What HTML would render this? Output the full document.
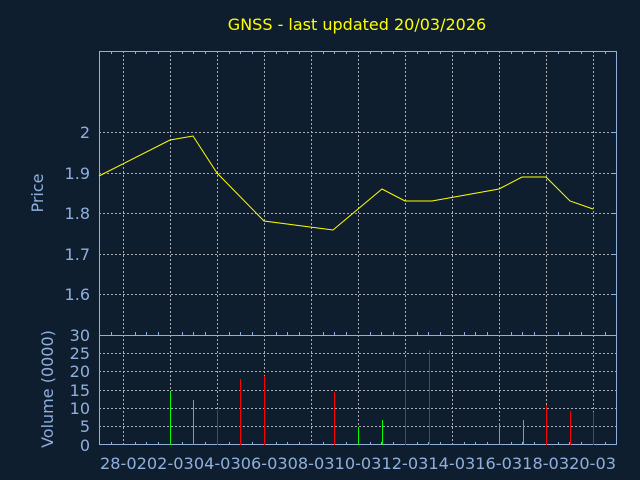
<!DOCTYPE html>
<html><head><meta charset="utf-8"><style>
html,body{margin:0;padding:0;background:#0f1e2f;}
svg{display:block;}
text{font-family:"DejaVu Sans","Liberation Sans",sans-serif;}
</style></head><body>
<svg width="640" height="480" viewBox="0 0 640 480" xmlns="http://www.w3.org/2000/svg">
<rect width="640" height="480" fill="#0f1e2f"/>
<text x="357" y="30" fill="#ffff00" font-size="16" text-anchor="middle">GNSS - last updated 20/03/2026</text>
<g stroke="#c8c8c8" stroke-width="1" stroke-dasharray="2,2" fill="none" opacity="0.85">
<path d="M123.5 51V445M170.5 51V445M217.5 51V445M264.5 51V445M311.5 51V445M358.5 51V445M405.5 51V445M452.5 51V445M499.5 51V445M546.5 51V445M593.5 51V445"/>
<path d="M99 132.5H617M99 173.5H617M99 213.5H617M99 254.5H617M99 294.5H617"/>
<path d="M99 353.5H617M99 371.5H617M99 390.5H617M99 408.5H617M99 426.5H617"/>
</g>
<g stroke="#8fb0dc" stroke-width="1" fill="none">
<rect x="99.5" y="51.5" width="517" height="393"/>
<path d="M99 335.5H617"/>
<path d="M111.5 51v3M135.5 51v3M146.5 51v3M158.5 51v3M182.5 51v3M193.5 51v3M205.5 51v3M229.5 51v3M240.5 51v3M252.5 51v3M276.5 51v3M287.5 51v3M299.5 51v3M323.5 51v3M334.5 51v3M346.5 51v3M370.5 51v3M381.5 51v3M393.5 51v3M417.5 51v3M428.5 51v3M440.5 51v3M464.5 51v3M475.5 51v3M487.5 51v3M511.5 51v3M522.5 51v3M534.5 51v3M558.5 51v3M569.5 51v3M581.5 51v3M605.5 51v3"/>
<path d="M111.5 335v-3M135.5 335v-3M146.5 335v-3M158.5 335v-3M182.5 335v-3M193.5 335v-3M205.5 335v-3M229.5 335v-3M240.5 335v-3M252.5 335v-3M276.5 335v-3M287.5 335v-3M299.5 335v-3M323.5 335v-3M334.5 335v-3M346.5 335v-3M370.5 335v-3M381.5 335v-3M393.5 335v-3M417.5 335v-3M428.5 335v-3M440.5 335v-3M464.5 335v-3M475.5 335v-3M487.5 335v-3M511.5 335v-3M522.5 335v-3M534.5 335v-3M558.5 335v-3M569.5 335v-3M581.5 335v-3M605.5 335v-3"/>
<path d="M111.5 445v-3M135.5 445v-3M146.5 445v-3M158.5 445v-3M182.5 445v-3M193.5 445v-3M205.5 445v-3M229.5 445v-3M240.5 445v-3M252.5 445v-3M276.5 445v-3M287.5 445v-3M299.5 445v-3M323.5 445v-3M334.5 445v-3M346.5 445v-3M370.5 445v-3M381.5 445v-3M393.5 445v-3M417.5 445v-3M428.5 445v-3M440.5 445v-3M464.5 445v-3M475.5 445v-3M487.5 445v-3M511.5 445v-3M522.5 445v-3M534.5 445v-3M558.5 445v-3M569.5 445v-3M581.5 445v-3M605.5 445v-3"/>
<path d="M612 132.5h5M612 173.5h5M612 213.5h5M612 254.5h5M612 294.5h5"/>
</g>
<polyline fill="none" stroke="#ffff00" stroke-width="1" points="99,176 170,140 193,136 217,173 264,221 333,230 382,189 405,201 432,201 499,189 522,177 546,177 570,201 593,209"/>
<g stroke-width="1">
<path stroke="#00ff00" d="M170.5 445V392M193.5 445V400M358.5 445V427M382.5 445V420M499.5 445V423M523.5 445V420"/>
<path stroke="#ff0000" d="M217.5 445V410M240.5 445V379M264.5 445V376M334.5 445V392M405.5 445V359M429.5 445V350M546.5 445V405M570.5 445V411M593.5 445V412"/>
</g>
<g fill="#8fb0dc" font-size="16" text-anchor="end">
<text x="90" y="138">2</text>
<text x="90" y="179">1.9</text>
<text x="90" y="219">1.8</text>
<text x="90" y="260">1.7</text>
<text x="90" y="300">1.6</text>
<text x="90" y="341">30</text>
<text x="90" y="359">25</text>
<text x="90" y="377">20</text>
<text x="90" y="396">15</text>
<text x="90" y="414">10</text>
<text x="90" y="432">5</text>
<text x="90" y="451">0</text>
</g>
<text transform="translate(43,193) rotate(-90)" fill="#8fb0dc" font-size="16" text-anchor="middle">Price</text>
<text transform="translate(53,389) rotate(-90)" fill="#8fb0dc" font-size="16" text-anchor="middle">Volume (0000)</text>
<text x="100" y="469" fill="#8fb0dc" font-size="16" textLength="516" lengthAdjust="spacingAndGlyphs">28-0202-0304-0306-0308-0310-0312-0314-0316-0318-0320-03</text>
</svg>
</body></html>
